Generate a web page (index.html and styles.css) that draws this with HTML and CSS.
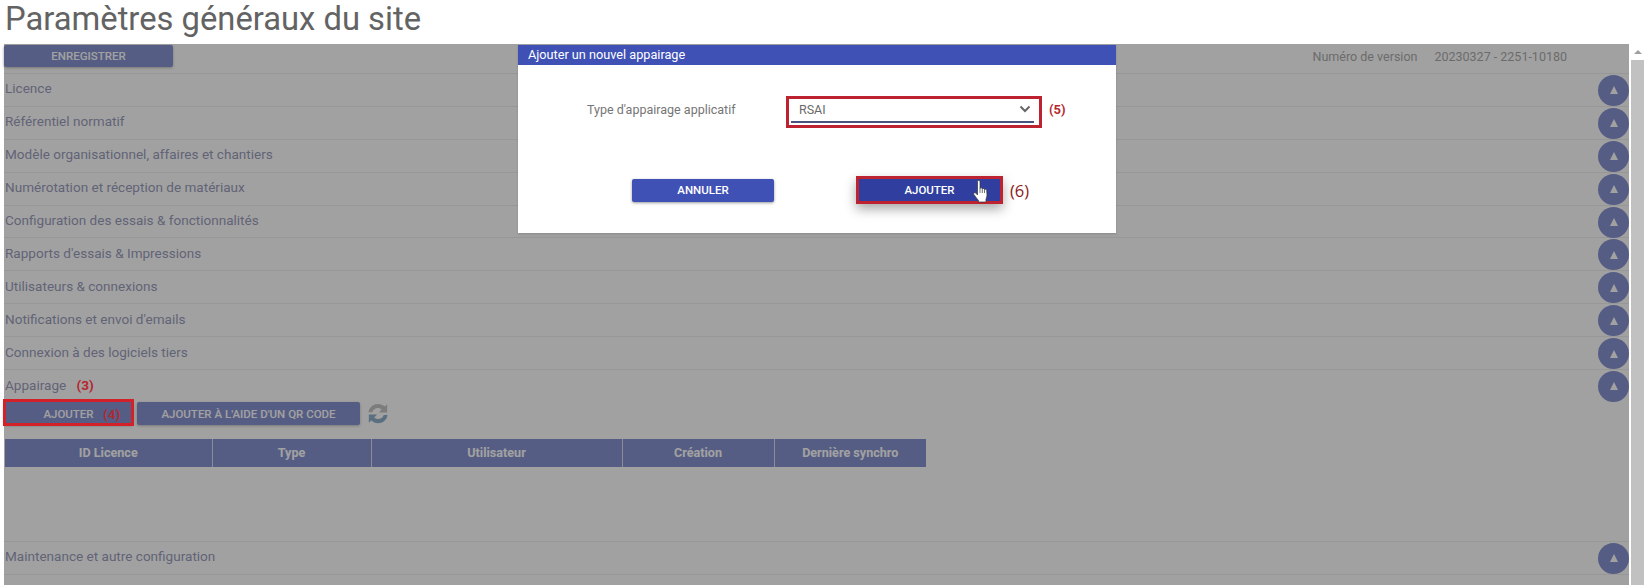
FILE: index.html
```html
<!DOCTYPE html>
<html lang="fr">
<head>
<meta charset="utf-8">
<title>Paramètres généraux du site</title>
<link rel="stylesheet" href="styles.css">
</head>
<body>
<h1 class="page-title">Paramètres généraux du site</h1>
<div class="main">
  <div class="content">
    <div class="toolbar">
      <button class="btn btn-save">ENREGISTRER</button>
      <div class="version"><span>Numéro de version</span><span>20230327 - 2251-10180</span></div>
    </div>
    <div class="row"><span class="row-title">Licence</span><span class="toggle"><i></i></span></div>
    <div class="row"><span class="row-title">Référentiel normatif</span><span class="toggle"><i></i></span></div>
    <div class="row"><span class="row-title">Modèle organisationnel, affaires et chantiers</span><span class="toggle"><i></i></span></div>
    <div class="row"><span class="row-title">Numérotation et réception de matériaux</span><span class="toggle"><i></i></span></div>
    <div class="row"><span class="row-title">Configuration des essais &amp; fonctionnalités</span><span class="toggle"><i></i></span></div>
    <div class="row"><span class="row-title">Rapports d'essais &amp; Impressions</span><span class="toggle"><i></i></span></div>
    <div class="row"><span class="row-title">Utilisateurs &amp; connexions</span><span class="toggle"><i></i></span></div>
    <div class="row"><span class="row-title">Notifications et envoi d'emails</span><span class="toggle"><i></i></span></div>
    <div class="row"><span class="row-title">Connexion à des logiciels tiers</span><span class="toggle"><i></i></span></div>
    <section class="panel">
      <div class="panel-head">
        <span class="row-title">Appairage <b class="note note-3">(3)</b></span><span class="toggle"><i></i></span>
      </div>
      <div class="panel-actions">
        <button class="btn btn-add marked">AJOUTER<b class="note note-4">(4)</b></button>
        <button class="btn btn-qr">AJOUTER À L'AIDE D'UN QR CODE</button>
        <svg class="refresh" viewBox="0 0 24 24" aria-hidden="true">
          <path class="refresh-top" d="M1.500 10.500C2.500 5 6.800 1.500 12 1.500c2.900 0 5.400 1.100 7.400 2.900L22 1.800v9h-9l3.100-3.100C14.900 6.700 13.500 6 12 6 8.900 6 6.500 7.800 5.700 10.500z"/>
          <path class="refresh-bottom" d="M22.500 13.500C21.500 19 17.200 22.500 12 22.500c-2.900 0-5.400-1.100-7.400-2.900L2 22.200v-9h9l-3.100 3.100C9.100 17.300 10.500 18 12 18c3.100 0 5.500-1.800 6.300-4.500z"/>
        </svg>
      </div>
      <table class="grid">
        <thead>
          <tr><th class="c1">ID Licence</th><th class="c2">Type</th><th class="c3">Utilisateur</th><th class="c4">Création</th><th class="c5">Dernière synchro</th></tr>
        </thead>
      </table>
    </section>
    <div class="row"><span class="row-title">Maintenance et autre configuration</span><span class="toggle"><i></i></span></div>
  </div>
  <div class="scrollbar"><div class="scroll-head"><i></i></div><div class="scroll-thumb"></div></div>
  <div class="overlay"></div>
  <div class="dialog">
    <div class="dialog-title">Ajouter un nouvel appairage</div>
    <div class="form-row">
      <label class="form-label">Type d'appairage applicatif</label>
      <div class="select-box">
        <div class="select">
          <span>RSAI</span>
          <svg class="chevron" viewBox="0 0 12 8" aria-hidden="true"><path d="M1.500 1.500 6 6l4.500-4.500"/></svg>
        </div>
      </div>
      <b class="note note-5">(5)</b>
    </div>
    <div class="dialog-actions">
      <button class="btn btn-cancel">ANNULER</button>
      <button class="btn btn-confirm">AJOUTER
        <svg class="hand" viewBox="0 0 16 23" aria-hidden="true">
          <path d="M4.500 1.500c0-1.300 2.500-1.300 2.500 0v7c.2-1 2.200-1 2.300.2v.5c.2-1 2.100-.9 2.200.2v.5c.2-.9 2.100-.8 2.200.3l.3 4.800c0 1.600-.5 2.800-1 3.900V22H5.500v-1.500C4 18.800 2.500 16.800.8 14.400c-.8-1.200 1-2.400 2-1.300l1.700 1.900z"/>
          <path class="hand-lines" d="M7 8.500v4.500M9.300 9.200v3.800M11.500 10v3"/>
        </svg>
      </button>
      <span class="note-6">(6)</span>
    </div>
  </div>
</div>
</body>
</html>
```
FILE: styles.css
```css
* { box-sizing: border-box; }
html, body { margin: 0; height: 585px; overflow: hidden; background: #fff; }
body { font-family: Roboto, "Liberation Sans", sans-serif; display: flex; flex-direction: column; }
.page-title { margin: 0; height: 44px; padding-left: 5px; font-size: 32.750px; font-weight: 400; line-height: 38px; color: #636363; white-space: nowrap; }
.main { position: relative; flex: 1; display: flex; padding-left: 4px; min-height: 0; }
.content { width: 1625px; }
.toolbar { height: 30px; padding-top: 1px; display: flex; justify-content: space-between; align-items: flex-start; border-bottom: 1px solid #e4e4e4; }
.btn { border: 0; border-radius: 2px; background: #3f51b5; color: #fff; font-family: inherit; font-weight: 500; font-size: 11.500px; padding: 0; box-shadow: 0 1px 3px rgba(0,0,0,.4); cursor: pointer; }
.btn-save { width: 169px; height: 22px; }
.version { display: flex; gap: 17px; margin-right: 62px; font-size: 12.500px; line-height: 23px; color: #757575; }
.row { height: 32.900px; display: flex; justify-content: space-between; align-items: center; border-bottom: 1px solid #e4e4e4; }
.row-title { padding: 0 0 3px 1px; font-size: 13.550px; color: #5a5f92; }
.toggle { width: 31px; height: 31px; margin-top: 1px; border-radius: 50%; background: #3f51b5; display: flex; align-items: center; justify-content: center; flex: none; }
.toggle i { width: 0; height: 0; border-left: 4.500px solid transparent; border-right: 4.500px solid transparent; border-bottom: 8px solid #fff; }
.panel { height: 172px; border-bottom: 1px solid #e4e4e4; }
.panel-head { height: 32px; display: flex; justify-content: space-between; align-items: center; }
.panel-head .toggle { margin-top: 0; }
.panel-actions { display: flex; align-items: center; gap: 4px; height: 23px; }
.btn-add { width: 129px; height: 23px; }
.btn-qr { width: 223px; height: 23px; }
.refresh { width: 22px; height: 23px; margin-left: 3px; }
.refresh-top { fill: #a0a0a0; }
.refresh-bottom { fill: #4a7ea8; }
.grid { border-collapse: collapse; table-layout: fixed; width: 921px; margin: 14px 0 0 1px; }
.grid th { height: 28px; padding: 0 0 2px; background: #3f51b5; color: #fff; font-size: 12.600px; font-weight: 700; text-align: center; border-right: 1px solid #c5cae9; }
.grid th:last-child { border-right: 0; }
.c1 { width: 207px; } .c2 { width: 159px; } .c3 { width: 251px; } .c4 { width: 152px; } .c5 { width: 152px; }
.scrollbar { width: 13px; margin-left: 2px; display: flex; flex-direction: column; }
.scroll-head { height: 16px; display: flex; align-items: center; justify-content: center; }
.scroll-head i { width: 0; height: 0; border-left: 4px solid transparent; border-right: 4px solid transparent; border-bottom: 4px solid #a0a0a0; }
.scroll-thumb { flex: 1; background: #c1c1c1; }
.overlay { position: absolute; top: 0; left: 4px; bottom: 0; width: 1625px; background: rgba(102,102,102,.61); z-index: 2; }
.note { position: relative; z-index: 3; font-weight: 700; color: #b8242c; }
.note-3 { margin-left: 7px; font-size: 13.600px; }
.note-4 { position: absolute; left: 99px; top: 4px; font-size: 13.600px; color: #ad2b36; }
.marked { position: relative; }
.marked::after { content: ""; position: absolute; inset: -3px -1px -1px -1px; border: 3px solid #d3212a; z-index: 3; }
.dialog { position: absolute; z-index: 4; top: 1px; left: 518px; width: 598px; height: 188px; background: #fff; box-shadow: 0 1px 2px rgba(0,0,0,.15); }
.dialog-title { height: 20px; padding-left: 10px; background: #3f51b5; color: #fff; font-size: 12.700px; font-weight: 400; line-height: 20px; }
.form-row { display: flex; align-items: flex-start; margin-top: 31px; padding-left: 69px; height: 32px; font-size: 12.500px; }
.form-label { width: 199px; line-height: 28px; color: #757575; }
.select-box { width: 256px; height: 32px; border: 3px solid #bd2230; padding: 0 5px 2px 2px; display: flex; }
.select { flex: 1; display: flex; align-items: center; justify-content: space-between; padding: 0 0 2px 8px; border-bottom: 2px solid #4a5280; color: #6a6a6a; }
.chevron { width: 12px; height: 8px; margin-right: 3px; }
.chevron path { fill: none; stroke: #666; stroke-width: 2; }
.note-5 { margin-left: 7px; font-size: 13px; line-height: 27px; color: #b52a2f; }
.dialog-actions { display: flex; align-items: center; margin-top: 48px; padding-left: 114px; height: 28px; }
.btn-cancel { width: 142px; height: 23px; }
.btn-confirm { position: relative; width: 147px; height: 28px; margin-left: 82px; background: #303f9f; border: 3px solid #bd2230; border-radius: 0; box-shadow: 0 5px 12px rgba(0,0,0,.35); }
.hand { position: absolute; left: 114px; top: 1px; width: 16px; height: 23px; }
.hand path { fill: #fff; stroke: #333; stroke-width: .7; stroke-linejoin: round; }
.hand .hand-lines { fill: none; }
.note-6 { margin-left: 7px; font-family: "Open Sans", sans-serif; font-size: 16.500px; color: #8b1a1a; }
```
